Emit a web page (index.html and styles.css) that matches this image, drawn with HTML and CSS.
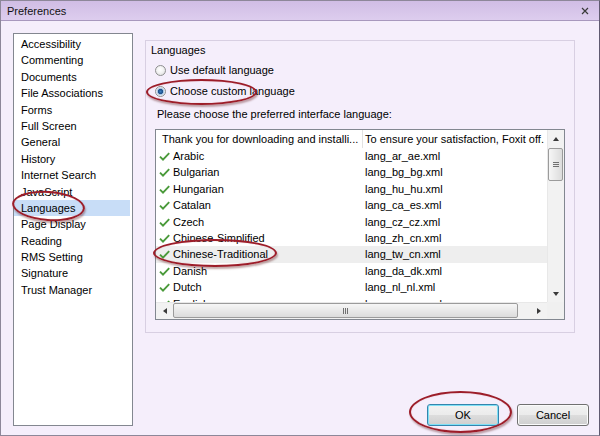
FILE: index.html
```html
<!DOCTYPE html>
<html>
<head>
<meta charset="utf-8">
<title>Preferences</title>
<link rel="stylesheet" href="styles.css">
</head>
<body>
<div class="window">
  <div class="titlebar">
    <span class="title">Preferences</span>
    <svg class="close" width="8" height="8" viewBox="0 0 8 8"><path d="M1 1 L7 7 M7 1 L1 7" stroke="#3a3a3a" stroke-width="1.2" fill="none"/></svg>
  </div>
  <div class="body">
    <ul class="categories">
      <li>Accessibility</li>
      <li>Commenting</li>
      <li>Documents</li>
      <li>File Associations</li>
      <li>Forms</li>
      <li>Full Screen</li>
      <li>General</li>
      <li>History</li>
      <li>Internet Search</li>
      <li>JavaScript</li>
      <li class="selected">Languages</li>
      <li>Page Display</li>
      <li>Reading</li>
      <li>RMS Setting</li>
      <li>Signature</li>
      <li>Trust Manager</li>
    </ul>
    <div class="main">
      <div class="group">
        <div class="group-label">Languages</div>
        <div class="radio-row first"><span class="radio"></span>Use default language</div>
        <div class="radio-row"><span class="radio checked"></span>Choose custom language</div>
        <div class="hint">Please choose the preferred interface language:</div>
        <div class="listview">
          <div class="lv-content">
            <div class="lv-header">
              <div class="h1">Thank you for downloading and installi...</div>
              <div class="h2">To ensure your satisfaction, Foxit off.</div>
            </div>
            <div class="lv-row"><div class="c1"><svg class="check" width="11" height="9" viewBox="0 0 11 9"><path d="M1 4.6 L4 7.6 L10.2 1.2" stroke="#4a9a3a" stroke-width="1.9" fill="none"/></svg>Arabic</div><div class="c2">lang_ar_ae.xml</div></div>
            <div class="lv-row"><div class="c1"><svg class="check" width="11" height="9" viewBox="0 0 11 9"><path d="M1 4.6 L4 7.6 L10.2 1.2" stroke="#4a9a3a" stroke-width="1.9" fill="none"/></svg>Bulgarian</div><div class="c2">lang_bg_bg.xml</div></div>
            <div class="lv-row"><div class="c1"><svg class="check" width="11" height="9" viewBox="0 0 11 9"><path d="M1 4.6 L4 7.6 L10.2 1.2" stroke="#4a9a3a" stroke-width="1.9" fill="none"/></svg>Hungarian</div><div class="c2">lang_hu_hu.xml</div></div>
            <div class="lv-row"><div class="c1"><svg class="check" width="11" height="9" viewBox="0 0 11 9"><path d="M1 4.6 L4 7.6 L10.2 1.2" stroke="#4a9a3a" stroke-width="1.9" fill="none"/></svg>Catalan</div><div class="c2">lang_ca_es.xml</div></div>
            <div class="lv-row"><div class="c1"><svg class="check" width="11" height="9" viewBox="0 0 11 9"><path d="M1 4.6 L4 7.6 L10.2 1.2" stroke="#4a9a3a" stroke-width="1.9" fill="none"/></svg>Czech</div><div class="c2">lang_cz_cz.xml</div></div>
            <div class="lv-row"><div class="c1"><svg class="check" width="11" height="9" viewBox="0 0 11 9"><path d="M1 4.6 L4 7.6 L10.2 1.2" stroke="#4a9a3a" stroke-width="1.9" fill="none"/></svg>Chinese-Simplified</div><div class="c2">lang_zh_cn.xml</div></div>
            <div class="lv-row hl"><div class="c1"><svg class="check" width="11" height="9" viewBox="0 0 11 9"><path d="M1 4.6 L4 7.6 L10.2 1.2" stroke="#4a9a3a" stroke-width="1.9" fill="none"/></svg>Chinese-Traditional</div><div class="c2">lang_tw_cn.xml</div></div>
            <div class="lv-row"><div class="c1"><svg class="check" width="11" height="9" viewBox="0 0 11 9"><path d="M1 4.6 L4 7.6 L10.2 1.2" stroke="#4a9a3a" stroke-width="1.9" fill="none"/></svg>Danish</div><div class="c2">lang_da_dk.xml</div></div>
            <div class="lv-row"><div class="c1"><svg class="check" width="11" height="9" viewBox="0 0 11 9"><path d="M1 4.6 L4 7.6 L10.2 1.2" stroke="#4a9a3a" stroke-width="1.9" fill="none"/></svg>Dutch</div><div class="c2">lang_nl_nl.xml</div></div>
            <div class="lv-row"><div class="c1"><svg class="check" width="11" height="9" viewBox="0 0 11 9"><path d="M1 4.6 L4 7.6 L10.2 1.2" stroke="#4a9a3a" stroke-width="1.9" fill="none"/></svg>English</div><div class="c2">lang_en_us.xml</div></div>
          </div>
          <div class="vscroll">
            <div class="sb-btn"><span class="arrow-up"></span></div>
            <div class="vthumb"><span class="vgrip"></span></div>
            <div class="sb-fill"></div>
            <div class="sb-btn"><span class="arrow-down"></span></div>
          </div>
          <div class="hscroll">
            <div class="sb-btn h"><span class="arrow-left"></span></div>
            <div class="hthumb"><span class="hgrip"></span></div>
            <div class="sb-fill"></div>
            <div class="sb-btn h"><span class="arrow-right"></span></div>
          </div>
          <div class="corner"></div>
        </div>
      </div>
      <div class="buttons">
        <button class="btn default">OK</button>
        <button class="btn">Cancel</button>
      </div>
    </div>
  </div>
  <div class="mark mark-lang"></div>
  <div class="mark mark-radio"></div>
  <div class="mark mark-zh"></div>
  <div class="mark mark-ok"></div>
</div>
</body>
</html>
```

FILE: styles.css
```css
html, body {
  margin: 0;
  padding: 0;
  background: #ffffff;
}
body {
  font-family: "Liberation Sans", Arial, sans-serif;
  font-size: 11px;
  color: #000;
}
.window {
  position: relative;
  width: 600px;
  height: 436px;
  box-sizing: border-box;
  border: 1px solid #8d8799;
  border-right-color: #5f5a70;
  background: #f5eefb;
  display: flex;
  flex-direction: column;
  overflow: hidden;
}
.titlebar {
  height: 19px;
  border-bottom: 1px solid #a898bd;
  background: linear-gradient(#d0bde5, #ddcdee);
  display: flex;
  align-items: center;
  justify-content: space-between;
  padding: 0 10px 0 6px;
}
.title {
  font-size: 11px;
  color: #111;
}
.close {
  display: block;
}
.body {
  flex: 1;
  display: flex;
  padding: 12px 10px 9px 12px;
  min-height: 0;
}
.categories {
  width: 120px;
  box-sizing: border-box;
  border: 1px solid #838790;
  background: #fff;
  margin: 0;
  padding: 2px 0 0;
  list-style: none;
}
.categories li {
  height: 16.4px;
  line-height: 17px;
  padding-left: 7px;
  white-space: nowrap;
}
.categories li.selected {
  background: #c8ddf7;
  margin-right: 2px;
}
.main {
  flex: 1;
  margin-left: 12px;
  display: flex;
  flex-direction: column;
}
.group {
  margin-top: 7px;
  margin-right: 14px;
  height: 293px;
  box-sizing: border-box;
  border: 1px solid #d8cfe2;
  padding: 1px 9px 0 9px;
}
.group-label {
  height: 16px;
  line-height: 16px;
  margin-left: -4px;
}
.radio-row {
  display: flex;
  align-items: center;
  height: 16px;
  line-height: 16px;
  margin-top: 5px;
}
.radio-row.first {
  margin-top: 4px;
}
.radio {
  width: 11px;
  height: 11px;
  box-sizing: border-box;
  border: 1px solid #8e8f8f;
  border-radius: 50%;
  margin-right: 4px;
  background: radial-gradient(circle at 45% 40%, #ffffff 0, #f4f4f4 40%, #d6d6d6 100%);
}
.radio.checked {
  background: radial-gradient(circle at 50% 50%, #3d7fc0 0, #1c4f8a 2.2px, #a9c4e0 3px, #f2f6fa 4.5px);
}
.hint {
  margin: 7px 0 0 2px;
  height: 16px;
  line-height: 16px;
}
.listview {
  margin-top: 7px;
  width: 410px;
  height: 191px;
  box-sizing: border-box;
  border: 1px solid #828790;
  background: #fff;
  display: grid;
  grid-template-columns: 391px 17px;
  grid-template-rows: 172px 17px;
}
.lv-content {
  overflow: hidden;
}
.lv-header {
  display: grid;
  grid-template-columns: 207px 184px;
  height: 18px;
  line-height: 18px;
}
.lv-header div {
  white-space: nowrap;
  overflow: hidden;
}
.h1 {
  padding-left: 6px;
  border-right: 1px solid #e2e2e2;
}
.h2 {
  padding-left: 2px;
}
.lv-row {
  display: grid;
  grid-template-columns: 207px 184px;
  height: 16.4px;
  line-height: 17px;
}
.lv-row.hl {
  background: #eeeeee;
}
.lv-row .c1 {
  display: flex;
  align-items: center;
  padding-left: 3px;
  white-space: nowrap;
}
.lv-row .c2 {
  padding-left: 2px;
  white-space: nowrap;
}
.check {
  display: block;
  margin-right: 3px;
  flex: none;
}
.vscroll {
  background: #f2f2f2;
  border-left: 1px solid #e8e8e8;
  display: flex;
  flex-direction: column;
}
.hscroll {
  background: #f2f2f2;
  border-top: 1px solid #e8e8e8;
  display: flex;
}
.corner {
  background: #f0f0f0;
}
.sb-btn {
  height: 17px;
  flex: none;
  display: flex;
  align-items: center;
  justify-content: center;
}
.sb-btn.h {
  width: 17px;
  height: auto;
}
.sb-fill {
  flex: 1;
}
.arrow-up {
  width: 0;
  height: 0;
  border-left: 3.5px solid transparent;
  border-right: 3.5px solid transparent;
  border-bottom: 4px solid #3a3a3a;
}
.arrow-down {
  width: 0;
  height: 0;
  border-left: 3.5px solid transparent;
  border-right: 3.5px solid transparent;
  border-top: 4px solid #3a3a3a;
}
.arrow-left {
  width: 0;
  height: 0;
  border-top: 3.5px solid transparent;
  border-bottom: 3.5px solid transparent;
  border-right: 4px solid #3a3a3a;
}
.arrow-right {
  width: 0;
  height: 0;
  border-top: 3.5px solid transparent;
  border-bottom: 3.5px solid transparent;
  border-left: 4px solid #3a3a3a;
}
.vthumb {
  margin: 1px 1px 0 0;
  height: 33px;
  box-sizing: border-box;
  border: 1px solid #9b9b9b;
  border-radius: 2px;
  background: linear-gradient(90deg, #f6f6f6, #e9e9e9 50%, #dcdcdc);
  display: flex;
  align-items: center;
  justify-content: center;
}
.vgrip {
  width: 6px;
  height: 5px;
  background: repeating-linear-gradient(#707070 0 1px, transparent 1px 2px);
}
.hthumb {
  width: 345px;
  margin: 0 0 1px;
  box-sizing: border-box;
  border: 1px solid #9b9b9b;
  border-radius: 2px;
  background: linear-gradient(#f6f6f6, #e9e9e9 50%, #dcdcdc);
  display: flex;
  align-items: center;
  justify-content: center;
}
.hgrip {
  width: 5px;
  height: 6px;
  background: repeating-linear-gradient(90deg, #707070 0 1px, transparent 1px 2px);
}
.buttons {
  margin-top: auto;
  display: flex;
  justify-content: flex-end;
  gap: 18px;
}
.btn {
  width: 72px;
  height: 22px;
  padding: 0;
  font-family: "Liberation Sans", Arial, sans-serif;
  font-size: 11px;
  color: #000;
  border: 1px solid #707070;
  border-radius: 3px;
  background: linear-gradient(#f2f2f2 0, #ebebeb 50%, #dddddd 50%, #cfcfcf 100%);
  box-shadow: inset 0 0 0 1px #fbfbfb;
}
.btn.default {
  border-color: #3585ad;
  box-shadow: inset 0 0 0 1px #7fe0f6;
}
.mark {
  position: absolute;
  box-sizing: border-box;
  border: 2.5px solid #9c1d29;
  border-radius: 50%;
  box-shadow: 1px 2px 2px rgba(80, 0, 0, 0.35), inset 0 0 1px rgba(200, 80, 90, 0.6);
}
.mark-lang {
  left: 11px;
  top: 190px;
  width: 73px;
  height: 30px;
  transform: rotate(4deg);
}
.mark-radio {
  left: 145px;
  top: 78px;
  width: 111px;
  height: 26px;
}
.mark-zh {
  left: 152px;
  top: 238px;
  width: 124px;
  height: 28px;
}
.mark-ok {
  left: 408px;
  top: 390px;
  width: 103px;
  height: 42px;
}
```
